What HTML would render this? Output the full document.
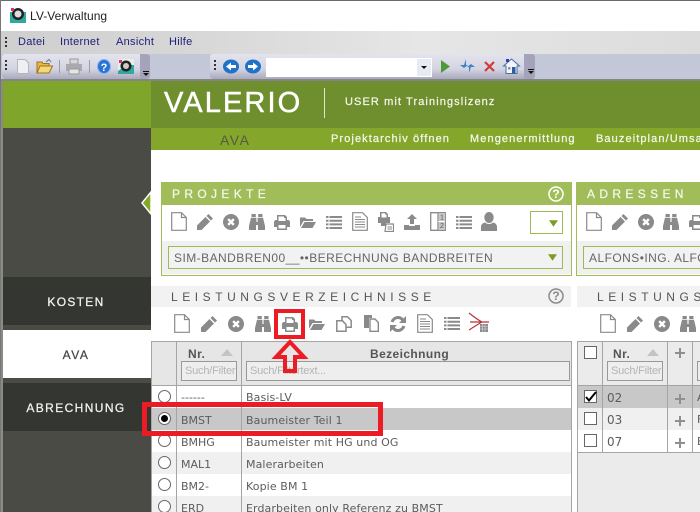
<!DOCTYPE html>
<html><head><meta charset="utf-8"><title>LV-Verwaltung</title>
<style>
html,body{margin:0;padding:0;overflow:hidden;width:700px;height:512px}
body{position:relative;background:#fff;font-family:"Liberation Sans",sans-serif}
#r{position:absolute;left:0;top:0;width:700px;height:512px;overflow:hidden}
.a,svg.i,.t{position:absolute}
.t{white-space:nowrap}
svg.i{overflow:visible;fill:#8a8a8a}
.d{font-family:"DejaVu Sans",sans-serif;font-size:11px;color:#5c5c5c}
.ph{font-size:11px;color:#b4b4b4;letter-spacing:-.2px}
.sh{letter-spacing:4.55px;font-size:12px;color:#555}
.rd{width:11px;height:11px;border:1px solid #666;border-radius:50%;background:#fff;position:absolute;left:158px}
.cb{width:11px;height:11px;border:1px solid #666;background:#fff;position:absolute;left:584px}
.w{-webkit-text-stroke:.25px currentColor}
</style></head><body><div id="r">
<svg width="0" height="0" style="position:absolute">
<defs>
<symbol id="doc" viewBox="0 0 16 19"><path d="M.7.7H10.5L15.3 5.5V18.3H.7Z M10.5.7V5.5H15.3" fill="#fff" stroke="#8a8a8a" stroke-width="1.2"/></symbol>
<symbol id="pen" viewBox="0 0 16 16"><path d="M11.5 0 16 4.5 14 6.5 9.5 2ZM8.5 3 13 7.5 4.5 16 0 16 0 11.5Z"/></symbol>
<symbol id="x" viewBox="0 0 16 16"><path fill-rule="evenodd" d="M8 0a8 8 0 1 0 0 16A8 8 0 0 0 8 0ZM4.3 6 6 4.3 8 6.3 10 4.3 11.7 6 9.7 8 11.7 10 10 11.7 8 9.7 6 11.7 4.3 10 6.3 8Z"/></symbol>
<symbol id="bin" viewBox="0 0 16 16"><path d="M2.500 0H6.800V3H2.500ZM9.200 0H13.500V3H9.200ZM2 3.800H7.400V8H8.600V3.800H14L16 12V16H9V11H7V16H0V12Z"/></symbol>
<symbol id="pr" viewBox="0 0 16 15"><path fill-rule="evenodd" d="M3 0H11L13 2V5H14C15 5 16 6 16 7V12H13V15H3V12H0V7C0 6 1 5 2 5H3ZM4.500 1.500V6H11.500V3H10V1.500ZM4.500 10V13.500H11.500V10Z"/></symbol>
<symbol id="fo" viewBox="0 0 16 12"><path d="M0 1.500H5L6.500 3H13V5H3.500L0 11ZM4.500 6H16L12.500 12H1Z"/></symbol>
<symbol id="li" viewBox="0 0 16 13"><path d="M0 0H2.500V2H0ZM3.500 0H16V2H3.500ZM0 3.700H2.500V5.700H0ZM3.500 3.700H16V5.700H3.500ZM0 7.400H2.500V9.400H0ZM3.500 7.400H16V9.400H3.500ZM0 11H2.500V13H0ZM3.500 11H16V13H3.500Z"/></symbol>
<symbol id="dl" viewBox="0 0 16 19"><path d="M.7.7H10.500L15.300 5.500V18.300H.7Z" fill="#fff" stroke="#8a8a8a" stroke-width="1.200"/><path d="M3 7.500H13M3 10H13M3 12.500H13M3 15H13M3 5H9" stroke="#8a8a8a" fill="none"/></symbol>
<symbol id="pc" viewBox="0 0 16 20"><path fill-rule="evenodd" d="M2 0H8L10 2V5H12V11H8V14H3V11H0V5H2ZM3.500 1.200V5.500H8.500V2.500H7.200V1.200Z"/><path d="M8 12H15.500V19.500H7Z" fill="#fff" stroke="#8a8a8a" stroke-width="1.200"/><path d="M9.500 15H14M9.500 17H14" stroke="#8a8a8a"/></symbol>
<symbol id="up" viewBox="0 0 16 16"><path d="M8 0 13 5H10V10H6V5H3ZM0 11H5V12H11V11H16V16H0Z"/></symbol>
<symbol id="gr" viewBox="0 0 16 19"><path d="M.7.7H15.300V18.300H.7ZM8 .7V18.300" fill="#fff" stroke="#8a8a8a" stroke-width="1.300"/><path d="M8 9.500H15" stroke="#8a8a8a"/><path d="M8.500 1H15V18H8.500Z" fill="#c8c8c8"/><path d="M8 9.500H15" stroke="#fff"/><text x="10" y="7.500" font-size="7" font-family="Liberation Sans" fill="#555">1</text><text x="10" y="16" font-size="7" font-family="Liberation Sans" fill="#555">2</text></symbol>
<symbol id="us" viewBox="0 0 16 19"><path d="M8 0a4.700 5.500 0 0 1 0 11A4.700 5.500 0 0 1 8 0ZM4 10.500C6 12.500 10 12.500 12 10.500 14.500 11 16 12.500 16 15V19H0V15C0 12.500 1.500 11 4 10.500Z"/></symbol>
<symbol id="c1" viewBox="0 0 16 16"><path d="M6 .8H11.500L15.200 4.500V11.200H6Z" fill="#fff" stroke="#8a8a8a" stroke-width="1.500"/><path d="M.8 4.800H6.500L10 8.500V15.200H.8Z" fill="#fff" stroke="#8a8a8a" stroke-width="1.500"/></symbol>
<symbol id="c2" viewBox="0 0 16 17"><path d="M1 0H9V3H6V13H1Z"/><path d="M7 4H12L15.300 7.500V16.300H7Z" fill="#fff" stroke="#8a8a8a" stroke-width="1.400"/></symbol>
<symbol id="re" viewBox="0 0 16 16"><path d="M8 0C10.500 0 12.300 1 13.500 2.500L16 0V7H9L11.300 4.700C10.500 3.700 9.500 3 8 3 5.800 3 4.200 4.500 3.500 6.500L.6 5.500C1.600 2.500 4.500 0 8 0ZM0 9H7L4.700 11.300C5.500 12.300 6.500 13 8 13 10.200 13 11.800 11.500 12.500 9.500L15.400 10.500C14.400 13.500 11.500 16 8 16 5.500 16 3.700 15 2.500 13.500L0 16Z"/></symbol>
<symbol id="tri" viewBox="0 0 11 8"><path d="M0 0H11L5.500 8Z" fill="#7c9e20"/></symbol>
<symbol id="pl" viewBox="0 0 10 10"><path d="M4 0H6V4H10V6H6V10H4V6H0V4H4Z" fill="#8f8f8f"/></symbol>
</defs>
</svg>

<!-- window chrome -->
<div class="a" style="left:0;top:0;width:700px;height:1px;background:#6a6a6a"></div>
<div class="a" style="left:0;top:0;width:1px;height:512px;background:#777"></div>
<svg class="i" style="left:9px;top:5px" width="17" height="18" viewBox="0 0 17 18"><path d="M1 7H17V18H1Z" fill="#2fa8a0"/><circle cx="9" cy="9" r="6" fill="#222"/><circle cx="9" cy="9" r="3.500" fill="#ddd"/><rect x="2" y="3" width="3" height="3" fill="#e0306a"/></svg>
<div class="t" style="left:30px;top:9px;font-size:12px;color:#222;letter-spacing:.05px">LV-Verwaltung</div>

<!-- menu bar -->
<div class="a" style="left:1px;top:31px;width:699px;height:23px;background:linear-gradient(90deg,#cfcfcf,#d6d6d6 25%,#e6e6e6 60%,#dcdcdc)"></div>
<div class="a" style="left:5px;top:37px;width:2px;height:10px;background:repeating-linear-gradient(#333 0 2px,transparent 2px 4px)"></div>
<div class="t" style="left:18px;top:36px;font-size:11px;color:#1c1c7c;letter-spacing:.3px">Datei</div>
<div class="t" style="left:60px;top:36px;font-size:11px;color:#1c1c7c;letter-spacing:.3px">Internet</div>
<div class="t" style="left:116px;top:36px;font-size:11px;color:#1c1c7c;letter-spacing:.3px">Ansicht</div>
<div class="t" style="left:169px;top:36px;font-size:11px;color:#1c1c7c;letter-spacing:.3px">Hilfe</div>

<!-- tool rows -->
<div class="a" style="left:1px;top:54px;width:699px;height:25px;background:#c2c8d8"></div>
<div class="a" style="left:2px;top:54px;width:148px;height:25px;border-radius:3px;background:linear-gradient(#e4e4ee,#d4d4e2 60%,#a9a9bf)"></div>
<div class="a" style="left:140px;top:54px;width:10px;height:25px;border-radius:0 3px 3px 0;background:#a3a3bb"></div>
<div class="a" style="left:210px;top:54px;width:325px;height:25px;border-radius:3px;background:linear-gradient(#e4e4ee,#d4d4e2 60%,#a9a9bf)"></div>
<div class="a" style="left:524px;top:54px;width:11px;height:25px;border-radius:0 3px 3px 0;background:#a3a3bb"></div>
<div class="a" style="left:5px;top:60px;width:2px;height:12px;background:repeating-linear-gradient(#333 0 2px,transparent 2px 4px)"></div>
<div class="a" style="left:214px;top:60px;width:2px;height:12px;background:repeating-linear-gradient(#333 0 2px,transparent 2px 4px)"></div>
<svg class="i" style="left:17px;top:59px" width="12" height="15" viewBox="0 0 12 15"><path d="M.5.500H8L11.500 4V14.500H.5Z" fill="#eef0f4" stroke="#b5b5b5"/></svg>
<svg class="i" style="left:36px;top:59px" width="17" height="15" viewBox="0 0 17 15"><path d="M1 3H6L7 4.500H13V14H1Z" fill="#e6b84a" stroke="#9a7420"/><path d="M1 14 4 7H16.500L13 14Z" fill="#f6d778" stroke="#9a7420"/><path d="M10 3 13 .5 15 3" fill="none" stroke="#5577aa"/></svg>
<div class="a" style="left:59px;top:60px;width:1px;height:13px;background:#9a9aaa"></div>
<svg class="i" style="left:66px;top:59px" width="16" height="15" viewBox="0 0 16 15"><path d="M4 0H12V5H4Z" fill="#d8d8dc" stroke="#999"/><path d="M0 5H16V12H0Z" fill="#a9a9af"/><path d="M3 10H13V15H3Z" fill="#e5e5e8" stroke="#999"/></svg>
<div class="a" style="left:89px;top:60px;width:1px;height:13px;background:#9a9aaa"></div>
<svg class="i" style="left:97px;top:59px" width="14" height="15" viewBox="0 0 14 15"><ellipse cx="7" cy="7.500" rx="6.500" ry="7" fill="#2a73d6" stroke="#8ab6ee"/><text x="7" y="12" font-size="11" font-weight="bold" text-anchor="middle" fill="#fff" font-family="Liberation Sans">?</text></svg>
<svg class="i" style="left:118px;top:59px" width="16" height="15" viewBox="0 0 16 15"><path d="M0 0H16V15H0Z" fill="#e8eee8"/><path d="M9 6H16V15H0V12Z" fill="#2fa8a0"/><circle cx="8" cy="7" r="5.500" fill="#222"/><circle cx="8" cy="7" r="3" fill="#ccc"/><rect x="1" y="1" width="3" height="3" fill="#e0306a"/></svg>
<div class="a" style="left:143px;top:71px;width:6px;height:1px;background:#111"></div>
<svg class="i" style="left:143px;top:73px" width="6" height="3"><path d="M0 0H6L3 3Z" fill="#111"/></svg>
<div class="a" style="left:528px;top:69px;width:6px;height:1px;background:#111"></div>
<svg class="i" style="left:528px;top:71px" width="6" height="3"><path d="M0 0H6L3 3Z" fill="#111"/></svg>
<svg class="i" style="left:223px;top:59px" width="16" height="15" viewBox="0 0 16 15"><ellipse cx="8" cy="7.500" rx="8" ry="7" fill="#1f72c8"/><path d="M3 7.500 8 3.500V6H13V9H8V11.500Z" fill="#fff"/></svg>
<svg class="i" style="left:245px;top:59px" width="16" height="15" viewBox="0 0 16 15"><ellipse cx="8" cy="7.500" rx="8" ry="7" fill="#1f72c8"/><path d="M13 7.500 8 3.500V6H3V9H8V11.500Z" fill="#fff"/></svg>
<div class="a" style="left:266px;top:58px;width:166px;height:19px;background:#fff"></div>
<div class="a" style="left:417px;top:59px;width:14px;height:17px;background:#e6eaf3"></div>
<svg class="i" style="left:421px;top:66px" width="6" height="3"><path d="M0 0H6L3 3Z" fill="#111"/></svg>
<svg class="i" style="left:441px;top:60px" width="9" height="13"><path d="M0 0 9 6.500 0 13Z" fill="#4c9a3c"/></svg>
<svg class="i" style="left:460px;top:59px" width="15" height="14" viewBox="0 0 15 14"><path d="M6 0 4 6H0L4 9 8 6H6ZM9 14 11 8H15L11 5 7 8H9Z" fill="#3f82c8"/></svg>
<svg class="i" style="left:484px;top:61px" width="11" height="11"><path d="M1 1 10 10M10 1 1 10" stroke="#d03a3a" stroke-width="2.200"/></svg>
<svg class="i" style="left:503px;top:58px" width="17" height="16" viewBox="0 0 17 16"><path d="M8.500 1 16.500 8H14V15.500H3V8H.5Z" fill="#f4f4f6" stroke="#4a6f9e"/><rect x="9" y="9" width="3.500" height="6.500" fill="#2c5f9e"/><rect x="5" y="9" width="2.500" height="2.500" fill="#7a98bb"/><rect x="3" y="1" width="3" height="3" fill="#2248b8"/></svg>
<div class="a" style="left:1px;top:79px;width:699px;height:2px;background:#858585"></div>

<!-- green header -->
<div class="a" style="left:3px;top:81px;width:148px;height:47px;background:#80a52b"></div>
<div class="a" style="left:151px;top:81px;width:549px;height:47px;background:#6f8e2e"></div>
<div class="a" style="left:151px;top:128px;width:549px;height:22px;background:#83a62b"></div>
<div class="t" style="left:164px;top:86px;font-size:29px;line-height:34px;color:#fff;letter-spacing:2.100px;-webkit-text-stroke:.5px #fff">VALERIO</div>
<div class="a" style="left:324px;top:88px;width:1px;height:30px;background:#dfe6cc"></div>
<div class="t w" style="left:345px;top:96px;font-size:11px;color:#f2f5e8;letter-spacing:1.100px">USER mit Trainingslizenz</div>
<div class="t" style="left:220px;top:132px;font-size:14px;color:#555a45;letter-spacing:1.500px">AVA</div>
<div class="t w" style="left:331px;top:133px;font-size:11px;color:#f4f7ea;letter-spacing:1.100px">Projektarchiv öffnen</div>
<div class="t w" style="left:470px;top:133px;font-size:11px;color:#f4f7ea;letter-spacing:1.100px">Mengenermittlung</div>
<div class="t w" style="left:596px;top:133px;width:104px;overflow:hidden;font-size:11px;color:#f4f7ea;letter-spacing:1.100px">Bauzeitplan/Umsatz</div>

<!-- sidebar -->
<div class="a" style="left:1px;top:81px;width:2px;height:431px;background:#8b8b85"></div>
<div class="a" style="left:3px;top:128px;width:148px;height:384px;background:#4a4b45"></div>
<div class="a" style="left:3px;top:277px;width:148px;height:48px;background:#343631"></div>
<div class="a" style="left:3px;top:330px;width:148px;height:48px;background:#fff"></div>
<div class="a" style="left:3px;top:383px;width:148px;height:48px;background:#343631"></div>
<div class="t w" style="left:3px;top:295px;width:146px;text-align:center;font-size:12px;color:#f4f4f4;letter-spacing:1.300px">KOSTEN</div>
<div class="t w" style="left:3px;top:348px;width:146px;text-align:center;font-size:12px;color:#444;letter-spacing:1.500px">AVA</div>
<div class="t w" style="left:3px;top:401px;width:146px;text-align:center;font-size:12px;color:#f4f4f4;letter-spacing:1.400px">ABRECHNUNG</div>
<svg class="i" style="left:141px;top:191px" width="11" height="24"><path d="M10 1 1 12 10 23Z" fill="#83a62b" stroke="#fff" stroke-width="1.500"/></svg>

<!-- PROJEKTE panel -->
<div class="a" style="left:161px;top:182px;width:409px;height:92px;border:1px solid #a0bd59;background:#fff"></div>
<div class="a" style="left:161px;top:182px;width:411px;height:23px;background:#a0bd59"></div>
<div class="a" style="left:162px;top:241px;width:409px;height:33px;background:#f0f0f0"></div>
<div class="t w" style="left:172px;top:187px;font-size:12px;color:#f4f7ea;letter-spacing:4.350px">PROJEKTE</div>
<svg class="i" style="left:548px;top:186px" width="16" height="16"><circle cx="8" cy="8" r="7" fill="none" stroke="#fff" stroke-width="1.500"/><text x="8" y="12" font-size="12" font-weight="bold" text-anchor="middle" fill="#fff" font-family="Liberation Sans">?</text></svg>
<svg class="i" style="left:171px;top:212px" width="16" height="19"><use href="#doc"/></svg>
<svg class="i" style="left:197px;top:214px" width="16" height="16"><use href="#pen"/></svg>
<svg class="i" style="left:223px;top:214px" width="16" height="16"><use href="#x"/></svg>
<svg class="i" style="left:249px;top:214px" width="16" height="16"><use href="#bin"/></svg>
<svg class="i" style="left:274px;top:215px" width="16" height="15"><use href="#pr"/></svg>
<svg class="i" style="left:300px;top:216px" width="16" height="12"><use href="#fo"/></svg>
<svg class="i" style="left:326px;top:216px" width="16" height="13"><use href="#li"/></svg>
<svg class="i" style="left:352px;top:212px" width="16" height="19"><use href="#dl"/></svg>
<svg class="i" style="left:378px;top:212px" width="16" height="20"><use href="#pc"/></svg>
<svg class="i" style="left:404px;top:214px" width="16" height="16"><use href="#up"/></svg>
<svg class="i" style="left:430px;top:212px" width="16" height="19"><use href="#gr"/></svg>
<svg class="i" style="left:456px;top:216px" width="16" height="13"><use href="#li"/></svg>
<svg class="i" style="left:481px;top:212px" width="16" height="19"><use href="#us"/></svg>
<div class="a" style="left:530px;top:211px;width:31px;height:21px;border:1px solid #9dbb55;background:#fff"></div>
<svg class="i" style="left:549px;top:220px" width="9" height="7"><use href="#tri"/></svg>
<div class="a" style="left:168px;top:246px;width:393px;height:21px;border:1px solid #9dbb55;background:#f2f2f2"></div>
<div class="t" style="left:174px;top:251px;font-size:12px;color:#666;letter-spacing:.45px">SIM-BANDBREN00__••BERECHNUNG BANDBREITEN</div>
<svg class="i" style="left:548px;top:254px" width="9" height="7"><use href="#tri"/></svg>

<!-- ADRESSEN panel -->
<div class="a" style="left:576px;top:182px;width:123px;height:92px;border:1px solid #a0bd59;border-right:none;background:#fff"></div>
<div class="a" style="left:576px;top:182px;width:124px;height:23px;background:#a0bd59"></div>
<div class="a" style="left:577px;top:241px;width:123px;height:33px;background:#f0f0f0"></div>
<div class="t w" style="left:587px;top:187px;font-size:12px;color:#f4f7ea;letter-spacing:4.350px">ADRESSEN</div>
<svg class="i" style="left:586px;top:212px" width="16" height="19"><use href="#doc"/></svg>
<svg class="i" style="left:612px;top:214px" width="16" height="16"><use href="#pen"/></svg>
<svg class="i" style="left:638px;top:214px" width="16" height="16"><use href="#x"/></svg>
<svg class="i" style="left:663px;top:214px" width="16" height="16"><use href="#bin"/></svg>
<svg class="i" style="left:689px;top:215px;overflow:hidden" width="11" height="15"><use href="#pr" width="16" height="15"/></svg>
<div class="a" style="left:583px;top:246px;width:116px;height:21px;border:1px solid #9dbb55;border-right:none;background:#f2f2f2"></div>
<div class="t" style="left:589px;top:251px;width:111px;overflow:hidden;font-size:12px;color:#666;letter-spacing:.45px">ALFONS•ING. ALFONS</div>

<!-- LV headers -->
<div class="a" style="left:151px;top:286px;width:420px;height:21px;background:#f2f2f2"></div>
<div class="a" style="left:577px;top:286px;width:123px;height:21px;background:#f2f2f2"></div>
<div class="t sh" style="left:171px;top:290px">LEISTUNGSVERZEICHNISSE</div>
<div class="t sh" style="left:597px;top:290px;width:103px;overflow:hidden">LEISTUNGSVERZEICHNISSE</div>
<svg class="i" style="left:548px;top:288px" width="16" height="16"><circle cx="8" cy="8" r="7" fill="none" stroke="#8a8a8a" stroke-width="1.500"/><text x="8" y="12" font-size="12" font-weight="bold" text-anchor="middle" fill="#8a8a8a" font-family="Liberation Sans">?</text></svg>

<svg class="i" style="left:174px;top:314px" width="16" height="19"><use href="#doc"/></svg>
<svg class="i" style="left:201px;top:316px" width="16" height="16"><use href="#pen"/></svg>
<svg class="i" style="left:228px;top:316px" width="16" height="16"><use href="#x"/></svg>
<svg class="i" style="left:255px;top:316px" width="16" height="16"><use href="#bin"/></svg>
<svg class="i" style="left:282px;top:317px" width="16" height="15"><use href="#pr"/></svg>
<svg class="i" style="left:309px;top:318px" width="16" height="12"><use href="#fo"/></svg>
<svg class="i" style="left:336px;top:316px" width="16" height="16"><use href="#c1"/></svg>
<svg class="i" style="left:363px;top:315px" width="16" height="17"><use href="#c2"/></svg>
<svg class="i" style="left:390px;top:316px" width="16" height="16"><use href="#re"/></svg>
<svg class="i" style="left:417px;top:314px" width="16" height="19"><use href="#dl"/></svg>
<svg class="i" style="left:444px;top:317px" width="16" height="13"><use href="#li"/></svg>
<svg class="i" style="left:469px;top:313px" width="20" height="20" viewBox="0 0 20 20"><path d="M0 0C5 4 9 7 13 9H20M13 9C9 9 6 9 1 9M13 9C9 11 5 14 0 17" fill="none" stroke="#b8333a" stroke-width="1.200"/><rect x="11" y="11" width="8" height="8" fill="#8a8a8a"/><path d="M11 13.500H19M11 16H19M13.500 11V19M16 11V19" stroke="#ddd" stroke-width=".6"/></svg>
<svg class="i" style="left:600px;top:314px" width="16" height="19"><use href="#doc"/></svg>
<svg class="i" style="left:627px;top:316px" width="16" height="16"><use href="#pen"/></svg>
<svg class="i" style="left:654px;top:316px" width="16" height="16"><use href="#x"/></svg>
<svg class="i" style="left:680px;top:316px" width="16" height="16"><use href="#bin"/></svg>

<!-- left table -->
<div class="a" style="left:151px;top:338px;width:421px;height:174px;background:#fff"></div>
<div class="a" style="left:151px;top:341px;width:420px;height:44px;background:#e6e6e6"></div>
<div class="a" style="left:151px;top:341px;width:421px;height:1px;background:#a5a5a5"></div>
<div class="a" style="left:151px;top:385px;width:421px;height:1px;background:#a5a5a5"></div>
<div class="a" style="left:151px;top:408px;width:420px;height:22px;background:#c8c8c8"></div>
<div class="a" style="left:151px;top:452px;width:420px;height:22px;background:#f0f0f0"></div>
<div class="a" style="left:151px;top:496px;width:420px;height:16px;background:#f0f0f0"></div>
<div class="a" style="left:151px;top:341px;width:1px;height:171px;background:#a5a5a5"></div>
<div class="a" style="left:176px;top:341px;width:1px;height:171px;background:#a5a5a5"></div>
<div class="a" style="left:241px;top:341px;width:1px;height:171px;background:#a5a5a5"></div>
<div class="a" style="left:571px;top:341px;width:1px;height:171px;background:#a5a5a5"></div>
<div class="t" style="left:188px;top:347px;font-size:12px;font-weight:bold;color:#555;letter-spacing:.4px">Nr.</div>
<svg class="i" style="left:221px;top:349px" width="12" height="7"><path d="M0 7 6 0 12 7Z" fill="#c4c4c4"/></svg>
<div class="t" style="left:370px;top:347px;font-size:12px;font-weight:bold;color:#555;letter-spacing:.4px">Bezeichnung</div>
<div class="a" style="left:181px;top:361px;width:54px;height:18px;border:1px solid #999;background:#eee;overflow:hidden"><div class="t ph" style="left:3px;top:3px">Such/Filter</div></div>
<div class="a" style="left:246px;top:361px;width:322px;height:18px;border:1px solid #999;background:#eee"><div class="t ph" style="left:3px;top:3px">Such/Filtertext...</div></div>

<div class="rd" style="top:390px"></div>
<div class="rd" style="top:412px"></div><div class="a" style="left:161px;top:415px;width:7px;height:7px;border-radius:50%;background:#000"></div>
<div class="rd" style="top:434px"></div>
<div class="rd" style="top:456px"></div>
<div class="rd" style="top:478px"></div>
<div class="rd" style="top:500px"></div>

<div class="t d" style="left:181px;top:391px">------</div><div class="t d" style="left:246px;top:391px;letter-spacing:.1px">Basis-LV</div>
<div class="t d" style="left:181px;top:414px">BMST</div><div class="t d" style="left:246px;top:414px;letter-spacing:.1px">Baumeister Teil 1</div>
<div class="t d" style="left:181px;top:436px">BMHG</div><div class="t d" style="left:246px;top:436px;letter-spacing:.1px">Baumeister mit HG und OG</div>
<div class="t d" style="left:181px;top:458px">MAL1</div><div class="t d" style="left:246px;top:458px;letter-spacing:.1px">Malerarbeiten</div>
<div class="t d" style="left:181px;top:480px">BM2-</div><div class="t d" style="left:246px;top:480px;letter-spacing:.1px">Kopie BM 1</div>
<div class="t d" style="left:181px;top:502px">ERD</div><div class="t d" style="left:246px;top:502px;letter-spacing:.1px">Erdarbeiten only Referenz zu BMST</div>

<!-- right table -->
<div class="a" style="left:577px;top:338px;width:123px;height:174px;background:#ebebeb"></div>
<div class="a" style="left:577px;top:338px;width:123px;height:3px;background:#fff"></div>
<div class="a" style="left:577px;top:341px;width:123px;height:1px;background:#a5a5a5"></div>
<div class="a" style="left:577px;top:385px;width:123px;height:23px;background:#c8c8c8"></div>
<div class="a" style="left:577px;top:408px;width:123px;height:22px;background:#f0f0f0"></div>
<div class="a" style="left:577px;top:430px;width:123px;height:22px;background:#fff"></div>
<div class="a" style="left:577px;top:452px;width:123px;height:1px;background:#a5a5a5"></div>
<div class="a" style="left:577px;top:385px;width:123px;height:1px;background:#a5a5a5"></div>
<div class="a" style="left:577px;top:341px;width:1px;height:171px;background:#a5a5a5"></div>
<div class="a" style="left:602px;top:341px;width:1px;height:112px;background:#a5a5a5"></div>
<div class="a" style="left:667px;top:341px;width:1px;height:112px;background:#a5a5a5"></div>
<div class="a" style="left:692px;top:341px;width:1px;height:112px;background:#a5a5a5"></div>
<div class="cb" style="top:346px"></div>
<div class="cb" style="top:390px"></div>
<svg class="i" style="left:585px;top:391px" width="12" height="11"><path d="M1 6 4 9.500 11 1" fill="none" stroke="#000" stroke-width="2"/></svg>
<div class="cb" style="top:412px"></div>
<div class="cb" style="top:434px"></div>
<div class="t" style="left:613px;top:347px;font-size:12px;font-weight:bold;color:#555;letter-spacing:.4px">Nr.</div>
<svg class="i" style="left:647px;top:349px" width="12" height="7"><path d="M0 7 6 0 12 7Z" fill="#c4c4c4"/></svg>
<div class="a" style="left:607px;top:361px;width:54px;height:18px;border:1px solid #999;background:#eee;overflow:hidden"><div class="t ph" style="left:3px;top:3px">Such/Filter</div></div>
<div class="a" style="left:697px;top:361px;width:2px;height:18px;border:1px solid #999;border-right:none;background:#eee"></div>
<svg class="i" style="left:675px;top:348px" width="10" height="10"><use href="#pl"/></svg>
<svg class="i" style="left:675px;top:394px" width="10" height="10"><use href="#pl"/></svg>
<svg class="i" style="left:675px;top:416px" width="10" height="10"><use href="#pl"/></svg>
<svg class="i" style="left:675px;top:438px" width="10" height="10"><use href="#pl"/></svg>
<div class="t d" style="left:607px;top:391px;font-size:12px">02</div><div class="t d" style="left:697px;top:391px;width:3px;overflow:hidden">A</div>
<div class="t d" style="left:607px;top:413px;font-size:12px">03</div><div class="t d" style="left:697px;top:413px;width:3px;overflow:hidden">F</div>
<div class="t d" style="left:607px;top:435px;font-size:12px">07</div><div class="t d" style="left:697px;top:435px;width:3px;overflow:hidden">E</div>

<!-- red annotations -->
<div class="a" style="left:274px;top:309px;width:23px;height:22px;border:4px solid #ed1c24"></div>
<svg class="i" style="left:270px;top:338px" width="40" height="36" viewBox="0 0 40 36"><path d="M20 4 6 19H15V33H25V19H34Z" fill="none" stroke="#ed1c24" stroke-width="4"/></svg>
<div class="a" style="left:142px;top:402px;width:231px;height:24px;border:5px solid #ed1c24"></div>
</div></body></html>
